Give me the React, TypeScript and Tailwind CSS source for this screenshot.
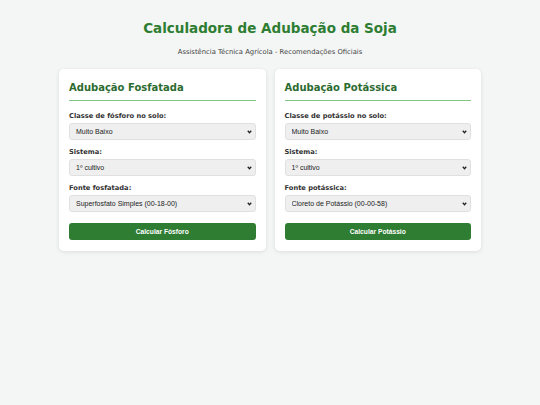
const cards = [
  {
    title: "Adubação Fosfatada",
    classLabel: "Classe de fósforo no solo:",
    sourceLabel: "Fonte fosfatada:",
    source: "Superfosfato Simples (00-18-00)",
    button: "Calcular Fósforo",
  },
  {
    title: "Adubação Potássica",
    classLabel: "Classe de potássio no solo:",
    sourceLabel: "Fonte potássica:",
    source: "Cloreto de Potássio (00-00-58)",
    button: "Calcular Potássio",
  },
];

function Field({ label, value }: { label: string; value: string }) {
  return (
    <div className="mb-[8px]">
      <label className="block text-[6.7px] font-bold text-[#333] leading-[9px] mb-[2px]">
        {label}
      </label>
      <div className="relative">
        <select
          defaultValue={value}
          className="block appearance-none w-full h-[17px] pl-[6px] pr-[12px] bg-[#efefef] border border-[#e0e0e0] rounded-[3px] text-[7px] leading-[15px] text-[#222] font-['Liberation_Sans',Arial,sans-serif]"
        >
          <option>{value}</option>
        </select>
        {/* small native-like arrow */}
        <svg
          className="absolute right-[4px] top-[7px] w-[5px] h-[4px] pointer-events-none"
          viewBox="0 0 10 8"
        >
          <path d="M1.5 1.5 L5 5.5 L8.5 1.5" fill="none" stroke="#222" strokeWidth="2.4" />
        </svg>
      </div>
    </div>
  );
}

export default function App() {
  return (
    <div className="min-h-[405px] bg-[#f4f6f5] pt-[19px] font-['DejaVu_Sans',Verdana,sans-serif]">
      <h1 className="text-center text-[13.5px] leading-[18px] font-bold text-[#2e7d32]">
        Calculadora de Adubação da Soja
      </h1>
      <p className="text-center text-[6.8px] leading-[9px] text-[#444] mt-[11px]">
        Assistência Técnica Agrícola - Recomendações Oficiais
      </p>

      <div className="mx-auto w-[422px] grid grid-cols-2 gap-[9px] mt-[12px]">
        {cards.map((c) => (
          <div
            key={c.title}
            className="bg-white rounded-[5px] shadow-[0_1px_4px_rgba(0,0,0,0.1)] px-[10px] pt-[12px] pb-[11px]"
          >
            <h2 className="text-[10px] leading-[14px] font-bold text-[#2c6b30] pb-[5px] border-b-[1.5px] border-[#81c784] mb-[11px]">
              {c.title}
            </h2>
            <Field label={c.classLabel} value="Muito Baixo" />
            <Field label="Sistema:" value="1º cultivo" />
            <Field label={c.sourceLabel} value={c.source} />
            <button className="block w-full h-[17px] mt-[11px] bg-[#2e7d32] text-white rounded-[3px] text-[6.7px] leading-[17px] font-bold font-['Liberation_Sans',Arial,sans-serif]">
              {c.button}
            </button>
          </div>
        ))}
      </div>
    </div>
  );
}
